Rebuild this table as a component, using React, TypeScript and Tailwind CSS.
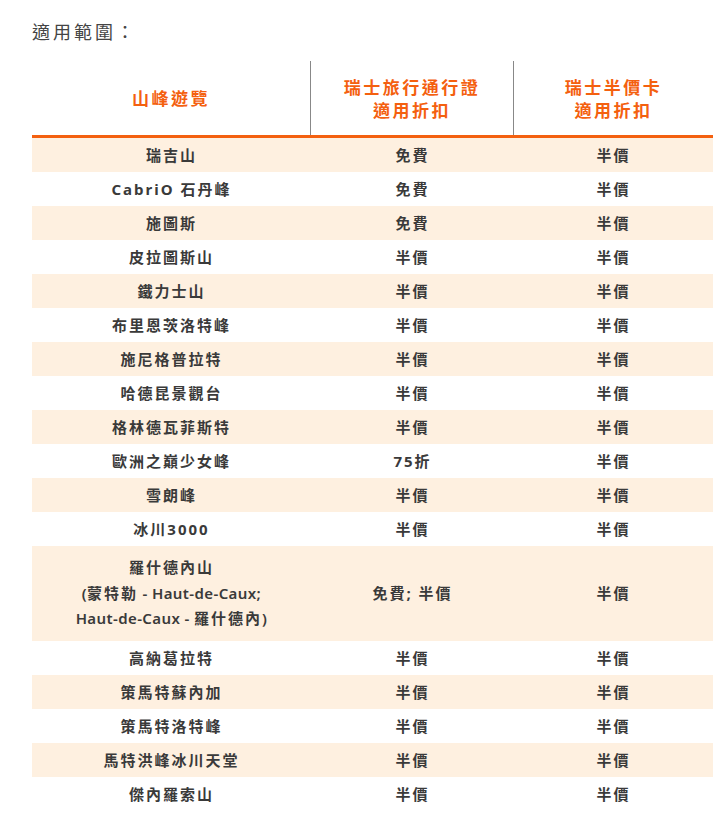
const rows: [string[], string, string][] = [
  [["瑞吉山"], "免費", "半價"],
  [["CabriO 石丹峰"], "免費", "半價"],
  [["施圖斯"], "免費", "半價"],
  [["皮拉圖斯山"], "半價", "半價"],
  [["鐵力士山"], "半價", "半價"],
  [["布里恩茨洛特峰"], "半價", "半價"],
  [["施尼格普拉特"], "半價", "半價"],
  [["哈德昆景觀台"], "半價", "半價"],
  [["格林德瓦菲斯特"], "半價", "半價"],
  [["歐洲之巔少女峰"], "75折", "半價"],
  [["雪朗峰"], "半價", "半價"],
  [["冰川3000"], "半價", "半價"],
  [["羅什德內山", "(蒙特勒 - Haut-de-Caux;", "Haut-de-Caux - 羅什德內)"], "免費; 半價", "半價"],
  [["高納葛拉特"], "半價", "半價"],
  [["策馬特蘇內加"], "半價", "半價"],
  [["策馬特洛特峰"], "半價", "半價"],
  [["馬特洪峰冰川天堂"], "半價", "半價"],
  [["傑內羅索山"], "半價", "半價"],
];

// latin runs in the long multi-line name sit tighter than the CJK text
function Line({ text, tight }: { text: string; tight: boolean }) {
  if (!tight) return <span>{text}</span>;
  const parts = text.split(/([\x20-\x7e]+)/).filter(Boolean);
  return (
    <span>
      {parts.map((p, k) =>
        /^[\x20-\x7e]+$/.test(p) ? (
          <span key={k} className="tracking-[0.4px] font-semibold">{p}</span>
        ) : (
          <span key={k}>{p}</span>
        )
      )}
    </span>
  );
}

export default function App() {
  return (
    <div className="min-h-screen bg-white px-8 pt-[19px] font-['Noto_Sans','Noto_Sans_CJK_TC',sans-serif]">
      <h2 className="text-[18px] leading-[26px] tracking-[3px] text-[#444]">適用範圍：</h2>
      <div className="mt-[16px] w-[681px]">
        <div className="grid grid-cols-[279px_203px_199px] h-[77px] border-b-[3px] border-[#f4600f] text-[17px] font-bold leading-[23px] tracking-[2.5px] text-[#f4600f]">
          <div className="flex items-center justify-center border-r border-[#888]">山峰遊覽</div>
          <div className="flex flex-col items-center justify-center border-r border-[#888] pt-[2px]">
            <span>瑞士旅行通行證</span>
            <span>適用折扣</span>
          </div>
          <div className="flex flex-col items-center justify-center pt-[2px]">
            <span>瑞士半價卡</span>
            <span>適用折扣</span>
          </div>
        </div>
        {rows.map(([name, pass, card], i) => (
          <div
            key={i}
            className={`grid grid-cols-[279px_203px_199px] text-[15px] font-bold tracking-[2px] text-[#3a3a3a] ${i % 2 === 0 ? "bg-[#fef0e0]" : "bg-white"} ${name.length > 1 ? "py-[9px] leading-[25.5px]" : "h-[34px] leading-[34px]"}`}
          >
            <div className="flex flex-col items-center justify-center">
              {name.map((l, j) => (
                <Line key={j} text={l} tight={name.length > 1} />
              ))}
            </div>
            <div className="flex items-center justify-center">{pass}</div>
            <div className="flex items-center justify-center">{card}</div>
          </div>
        ))}
      </div>
    </div>
  );
}
